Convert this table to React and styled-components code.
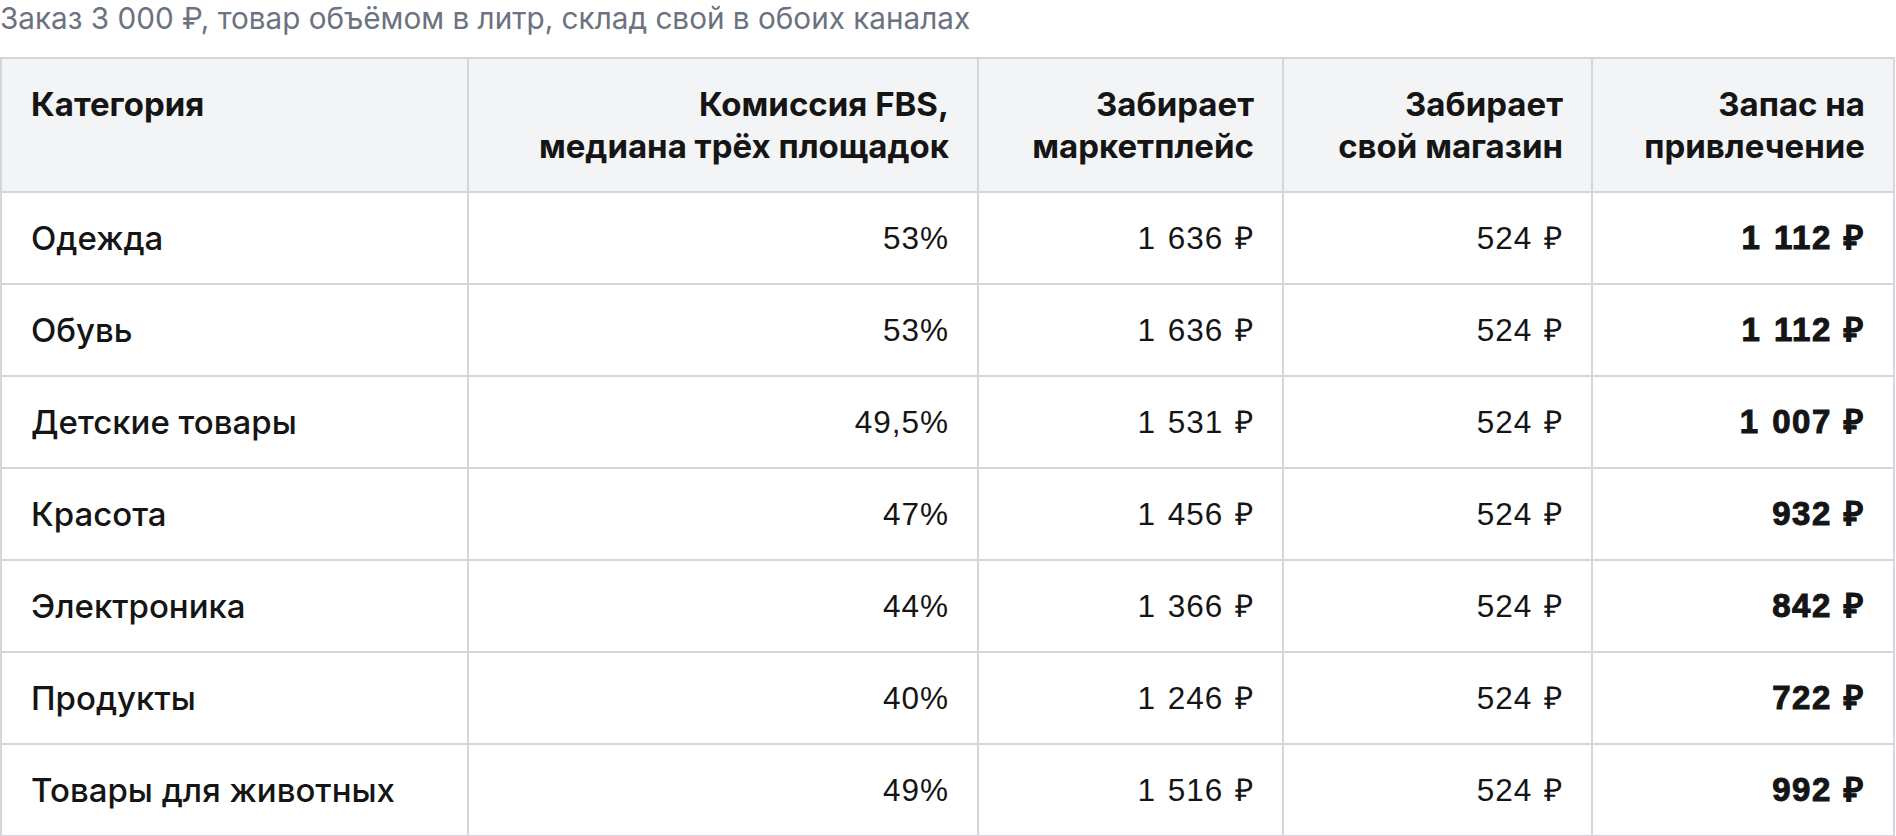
import React from "react";
import styled, { createGlobalStyle } from "styled-components";

const rows = [
  { name: "Одежда", fee: "53%", market: "1 636 ₽", own: "524 ₽", reserve: "1 112 ₽" },
  { name: "Обувь", fee: "53%", market: "1 636 ₽", own: "524 ₽", reserve: "1 112 ₽" },
  { name: "Детские товары", fee: "49,5%", market: "1 531 ₽", own: "524 ₽", reserve: "1 007 ₽" },
  { name: "Красота", fee: "47%", market: "1 456 ₽", own: "524 ₽", reserve: "932 ₽" },
  { name: "Электроника", fee: "44%", market: "1 366 ₽", own: "524 ₽", reserve: "842 ₽" },
  { name: "Продукты", fee: "40%", market: "1 246 ₽", own: "524 ₽", reserve: "722 ₽" },
  { name: "Товары для животных", fee: "49%", market: "1 516 ₽", own: "524 ₽", reserve: "992 ₽" },
];

export default function App() {
  return (
    <>
      <GlobalStyle />
      <Wrapper>
        <Caption>Заказ 3 000 ₽, товар объёмом в литр, склад свой в обоих каналах</Caption>
        <Table>
          <colgroup>
            <col style={{ width: 467 }} />
            <col style={{ width: 510 }} />
            <col style={{ width: 305 }} />
            <col style={{ width: 309 }} />
            <col />
          </colgroup>
          <thead>
            <tr>
              <Th>Категория</Th>
              <Th $right>
                Комиссия FBS,
                <br />
                медиана трёх площадок
              </Th>
              <Th $right>
                Забирает
                <br />
                маркетплейс
              </Th>
              <Th $right>
                Забирает
                <br />
                свой магазин
              </Th>
              <Th $right>
                Запас на
                <br />
                привлечение
              </Th>
            </tr>
          </thead>
          <tbody>
            {rows.map((r) => (
              <tr key={r.name}>
                <Name>{r.name}</Name>
                <Num>{r.fee}</Num>
                <Num>{r.market}</Num>
                <Num>{r.own}</Num>
                <Reserve>{r.reserve}</Reserve>
              </tr>
            ))}
          </tbody>
        </Table>
      </Wrapper>
    </>
  );
}

const GlobalStyle = createGlobalStyle`
  body {
    margin: 0;
    background: #ffffff;
    font-family: Inter, "Noto Sans", sans-serif;
    color: #151515;
  }
`;

const Wrapper = styled.div`
  display: flex;
  flex-direction: column;
`;

const Caption = styled.div`
  font-family: Inter, sans-serif;
  font-size: 29.7px;
  line-height: 36px;
  color: #6b7280;
  padding: 0 0 21px 0;
`;

const Table = styled.table`
  width: 1895px;
  border-collapse: collapse;
  table-layout: fixed;
`;

const Th = styled.th`
  background: #f3f4f6;
  border: 2px solid #d4d6dc;
  padding: 24px 28px 24px 29px;
  font-family: Inter, sans-serif;
  font-weight: 700;
  font-size: 33px;
  line-height: 42px;
  text-align: ${(p) => (p.$right ? "right" : "left")};
  vertical-align: top;
  color: #151515;
`;

const Td = styled.td`
  border: 2px solid #d4d6dc;
  padding: 24px 28px 24px 29px;
  font-size: 33px;
  line-height: 42px;
  color: #151515;
`;

const Name = styled(Td)`
  font-family: Inter, sans-serif;
  font-weight: 500;
  text-align: left;
`;

const Num = styled(Td)`
  font-family: "Liberation Sans", Arial, sans-serif;
  font-size: 31.5px;
  letter-spacing: 1px;
  word-spacing: 2px;
  text-align: right;
`;

const Reserve = styled(Num)`
  font-size: 33px;
  font-weight: 700;
  letter-spacing: 1.5px;
  word-spacing: 2px;
  -webkit-text-stroke: 1px #151515;
`;
